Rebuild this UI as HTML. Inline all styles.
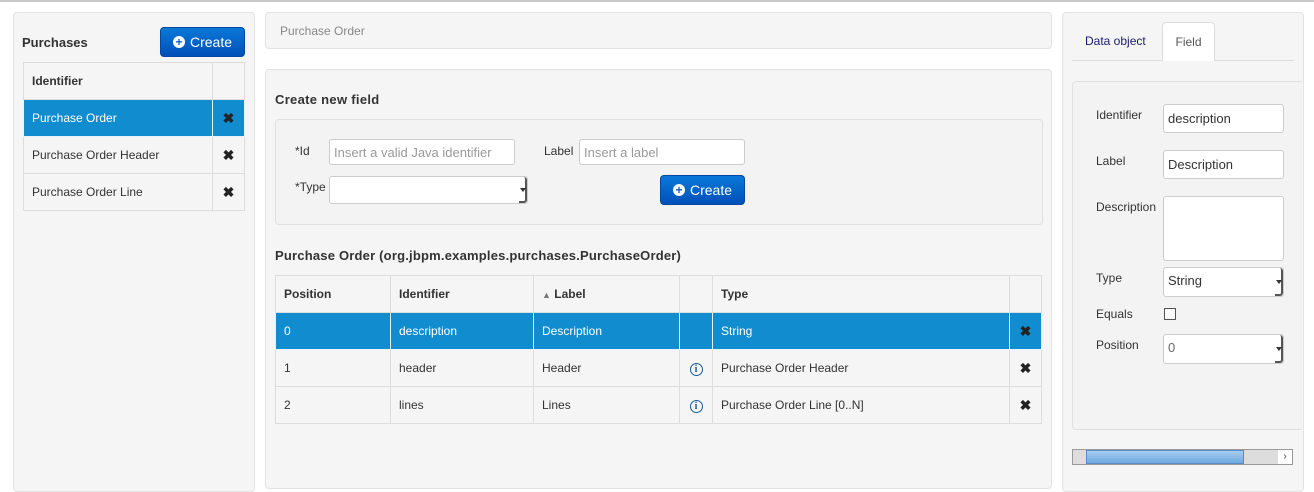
<!DOCTYPE html><html><head><style>
*{box-sizing:border-box}body{margin:0;width:1314px;height:481px;background:#fff;font-family:"Liberation Sans",sans-serif;font-size:12px;color:#333;position:relative;overflow:hidden}
.a{position:absolute}
.panel{background:#f5f5f5;border:1px solid #e3e3e3;border-radius:4px}
.btn{background:linear-gradient(#0a78d8,#0050b8);border:1px solid #04479f;border-radius:4px;color:#fff;font-size:14px;display:flex;align-items:center;justify-content:center;gap:5px}
.pl{width:12px;height:12px;border-radius:50%;background:#fff;color:#0a60c8;font-size:12px;font-weight:bold;line-height:12px;text-align:center}
.inp{background:#fff;border:1px solid #ccc;border-radius:3px;font-size:13px;padding:0 4px;display:flex;align-items:center}
table{border-collapse:collapse;position:absolute;background:#f5f5f5}
td,th{border:1px solid #ddd;text-align:left;padding:0 8px;height:37px}
th{font-weight:bold}
tr.sel td{background:#118ccf;color:#fff;border-color:#e8f3fb}
.x{font-weight:bold;font-size:14px;text-align:center;color:#222}
.i{display:inline-block;width:13px;height:13px;border:1.5px solid #1a5a9a;border-radius:50%;color:#1a5a9a;font-size:10px;font-weight:bold;line-height:11px;text-align:center;font-family:"Liberation Serif",serif}
.lbl{position:absolute;font-size:12px;color:#333}
.caret{position:absolute;right:0;top:0;bottom:0;width:8px;border-right:2px solid #555;border-bottom:2px solid #555;border-radius:0 3px 3px 0}
.caret:after{content:"";position:absolute;left:1px;top:45%;border:3px solid transparent;border-top:4px solid #333}
</style></head><body>
<div class="a" style="left:0;top:0;width:1314px;height:2px;background:#c8c8c8"></div>
<div class="a panel" style="left:13px;top:12px;width:242px;height:480px"></div>
<div class="a" style="left:22px;top:35px;font-weight:bold;font-size:13px">Purchases</div>
<div class="a btn" style="left:160px;top:27px;width:85px;height:30px"><span class="pl">+</span>Create</div>
<table style="left:23px;top:62px;width:222px">
<tr><th style="width:189px">Identifier</th><th></th></tr>
<tr class="sel"><td>Purchase Order</td><td class="x" style="background:#118ccf;color:#222">✖</td></tr>
<tr><td>Purchase Order Header</td><td class="x">✖</td></tr>
<tr><td>Purchase Order Line</td><td class="x">✖</td></tr></table>
<div class="a panel" style="left:265px;top:12px;width:787px;height:37px"></div>
<div class="a" style="left:280px;top:24px;color:#888">Purchase Order</div>
<div class="a panel" style="left:265px;top:69px;width:787px;height:420px"></div>
<div class="a" style="left:275px;top:92px;font-weight:bold;font-size:13px;letter-spacing:.3px">Create new field</div>
<div class="a" style="left:275px;top:119px;width:768px;height:106px;border:1px solid #e0e0e0;border-radius:4px;background:#f3f3f3"></div>
<div class="lbl" style="left:295px;top:144px">*Id</div>
<div class="a inp" style="left:329px;top:139px;width:186px;height:26px;color:#999">Insert a valid Java identifier</div>
<div class="lbl" style="left:544px;top:144px">Label</div>
<div class="a inp" style="left:579px;top:139px;width:166px;height:26px;color:#999">Insert a label</div>
<div class="lbl" style="left:295px;top:180px">*Type</div>
<div class="a inp" style="left:329px;top:176px;width:199px;height:28px"><span class="caret"></span></div>
<div class="a btn" style="left:660px;top:175px;width:85px;height:30px"><span class="pl">+</span>Create</div>
<div class="a" style="left:275px;top:248px;font-weight:bold;font-size:13px;letter-spacing:.2px">Purchase Order (org.jbpm.examples.purchases.PurchaseOrder)</div>
<table style="left:275px;top:275px;width:767px">
<tr><th style="width:115px">Position</th><th style="width:143px">Identifier</th><th style="width:146px"><span style="color:#777;font-size:9px">▲</span> Label</th><th style="width:33px"></th><th style="width:297px">Type</th><th></th></tr>
<tr class="sel"><td>0</td><td>description</td><td>Description</td><td></td><td>String</td><td class="x" style="background:#118ccf;color:#222">✖</td></tr>
<tr><td>1</td><td>header</td><td>Header</td><td style="text-align:center"><span class="i">i</span></td><td>Purchase Order Header</td><td class="x">✖</td></tr>
<tr><td>2</td><td>lines</td><td>Lines</td><td style="text-align:center"><span class="i">i</span></td><td>Purchase Order Line [0..N]</td><td class="x">✖</td></tr></table>
<div class="a panel" style="left:1062px;top:12px;width:242px;height:480px"></div>
<div class="a" style="left:1072px;top:60px;width:222px;border-top:1px solid #ddd"></div>
<div class="a" style="left:1085px;top:34px;color:#1a1a6e">Data object</div>
<div class="a" style="left:1162px;top:22px;width:53px;height:39px;background:#fff;border:1px solid #ddd;border-bottom:none;border-radius:4px 4px 0 0;text-align:center;line-height:38px;color:#555">Field</div>
<div class="a" style="left:1072px;top:81px;width:230px;height:349px;border:1px solid #e0e0e0;border-right:none;border-radius:4px 0 0 4px;background:#f3f3f3"></div>
<div class="lbl" style="left:1096px;top:108px">Identifier</div>
<div class="a inp" style="left:1163px;top:104px;width:121px;height:29px">description</div>
<div class="lbl" style="left:1096px;top:154px">Label</div>
<div class="a inp" style="left:1163px;top:150px;width:121px;height:29px">Description</div>
<div class="lbl" style="left:1096px;top:200px">Description</div>
<div class="a inp" style="left:1163px;top:196px;width:121px;height:65px"></div>
<div class="lbl" style="left:1096px;top:271px">Type</div>
<div class="a inp" style="left:1163px;top:267px;width:121px;height:30px;align-items:flex-start;padding-top:5px">String<span class="caret"></span></div>
<div class="lbl" style="left:1096px;top:307px">Equals</div>
<div class="a" style="left:1164px;top:308px;width:12px;height:12px;border:1px solid #555;background:#fff"></div>
<div class="lbl" style="left:1096px;top:338px">Position</div>
<div class="a inp" style="left:1163px;top:334px;width:121px;height:30px;align-items:flex-start;padding-top:5px;color:#666">0<span class="caret"></span></div>
<div class="a" style="left:1072px;top:449px;width:221px;height:16px;border:1px solid #999;background:#ddd"></div>
<div class="a" style="left:1086px;top:450px;width:158px;height:14px;background:linear-gradient(#a8cdf0,#6fa8e0);border:1px solid #5a8cc8"></div>
<div class="a" style="left:1278px;top:450px;width:14px;height:14px;background:#fff;font-size:10px;text-align:center;line-height:13px">›</div>
</body></html>
